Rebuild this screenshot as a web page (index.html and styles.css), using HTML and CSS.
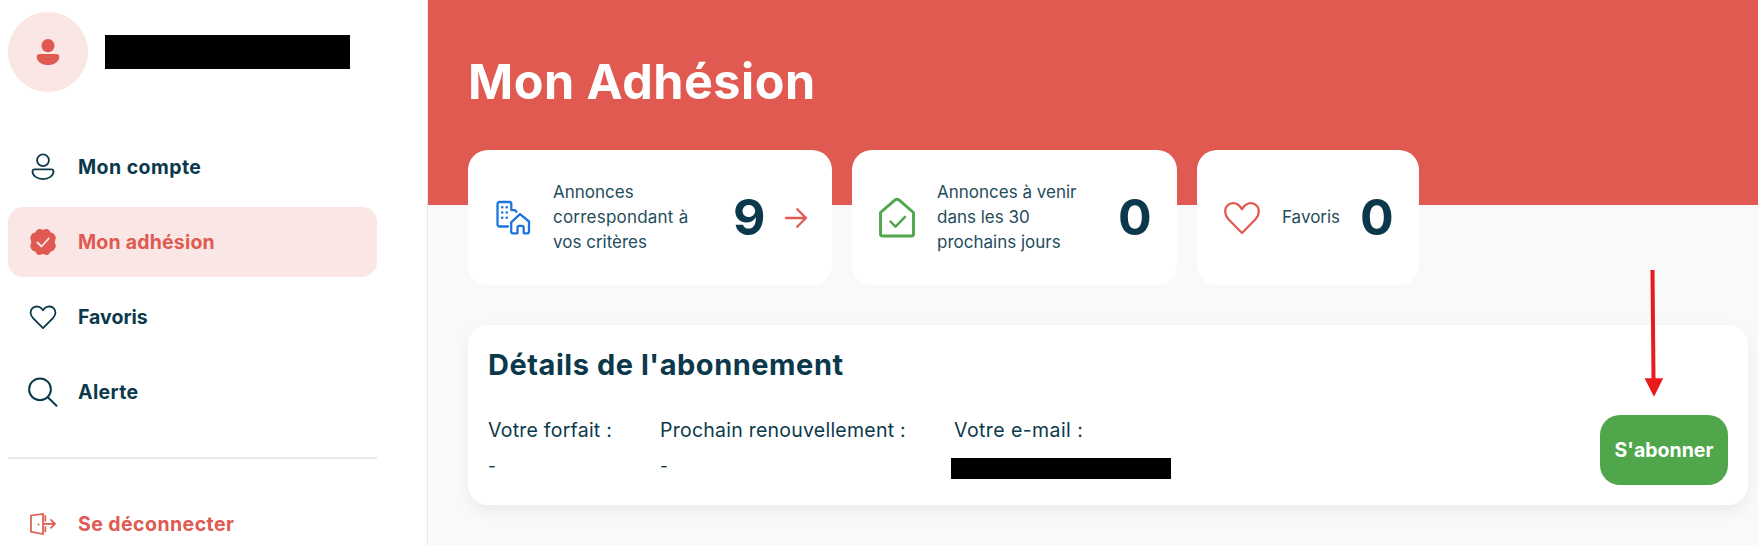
FILE: index.html
```
<!DOCTYPE html>
<html lang="fr">
<head>
    <meta charset="UTF-8">
    <meta name="viewport" content="width=device-width, initial-scale=1.0">
    <title>Mon Adhésion</title>
    <link rel="stylesheet" href="styles.css">
</head>
<body>
    <aside class="sidebar">
        <div class="profile">
            <div class="avatar">
                <svg width="24" height="28" viewBox="0 0 24 28" fill="currentColor">
                    <circle cx="12" cy="7.6" r="6.6"/>
                    <path d="M3.5 16h17c1.7 0 2.8 1.1 2.8 2.8 0 4.600-5.100 8.300-11.300 8.300S.7 23.400.7 18.800C.7 17.100 1.800 16 3.500 16z"/>
                </svg>
            </div>
            <div class="profile-name"></div>
        </div>
        <nav class="menu">
            <a class="menu-item">
                <svg class="icon" viewBox="0 0 30 30" fill="none" stroke="currentColor" stroke-width="1.8">
                    <circle cx="15" cy="8.300" r="5.900"/>
                    <path d="M6.700 17.400h16.600c1.400 0 2.200.8 2.200 2.200 0 4.100-4.700 7.500-10.500 7.500S4.500 23.700 4.500 19.600c0-1.400.8-2.200 2.200-2.200z"/>
                </svg>
                <span class="menu-compte">Mon compte</span>
            </a>
            <a class="menu-item active">
                <svg class="icon" viewBox="0 0 30 30">
                    <path fill="currentColor" stroke="currentColor" stroke-width="1.500" stroke-linejoin="round" d="M11 2.800Q13 2.500 15 4Q17 2.500 19 2.800Q21.300 3.500 22 6Q24.800 6.200 26 8.200Q27.700 10 26.600 12.800Q26 14 25.800 15Q26 16 26.800 17.500Q27.700 20 26 21.800Q24.800 23.700 22 24Q21.300 26.500 19 27.200Q17 27.500 15 26Q13 27.500 11 27.200Q8.700 26.500 8 24Q5.200 23.800 4 21.800Q2.300 20 3.300 17.500Q4 16 4.200 15Q4 14 3.300 12.800Q2.300 10 4 8.200Q5.200 6.200 8 6Q8.700 3.500 11 2.800z"/>
                    <path fill="none" stroke="#fae6e5" stroke-width="1.800" stroke-linecap="round" stroke-linejoin="round" d="M9.500 15.500l4 4 7.200-8"/>
                </svg>
                <span class="menu-adhesion">Mon adhésion</span>
            </a>
            <a class="menu-item">
                <svg class="icon" viewBox="0 0 30 30" fill="none" stroke="currentColor" stroke-width="1.800" stroke-linejoin="round">
                    <path d="M15 26.200L4.800 15.800C1.600 12.400 2 8 4.900 5.800c3.100-2.300 7.500-1.600 10.100 2.400 2.600-4 7-4.700 10.100-2.400 2.900 2.200 3.300 6.600.1 10z"/>
                </svg>
                <span>Favoris</span>
            </a>
            <a class="menu-item">
                <svg class="icon" viewBox="0 0 30 30" fill="none" stroke="currentColor" stroke-width="2" stroke-linecap="round">
                    <circle cx="12" cy="12.300" r="10.900"/>
                    <path d="M19.800 20.200l8.700 8.500"/>
                </svg>
                <span class="menu-alerte">Alerte</span>
            </a>
        </nav>
        <hr class="separator">
        <a class="menu-item logout">
            <svg class="icon" viewBox="0 0 30 30" fill="none" stroke="currentColor" stroke-width="1.700">
                <path d="M3 6.500L15 5v20L3 22.800zM17.300 6.300v6.200M17.300 17.300v6M14.500 14.800h12M22.500 10.300l4.500 4.500-4.500 4.500"/>
                <circle cx="10.500" cy="15.500" r="1" fill="currentColor" stroke="none"/>
            </svg>
            <span class="menu-logout">Se déconnecter</span>
        </a>
    </aside>

    <main class="content">
        <header class="banner">
            <h1>Mon Adhésion</h1>
        </header>

        <section class="stats">
            <div class="card card-criteres">
                <svg class="card-icon" width="36" height="36" viewBox="0 0 36 36" fill="none" stroke="#1d76df" stroke-width="2.300" stroke-linecap="round" stroke-linejoin="round">
                    <path d="M13 26.500H4.500a2 2 0 0 1-2-2V4a2 2 0 0 1 2-2h9.800a2 2 0 0 1 2 2v6.200H20l1.300 1.600"/>
                    <path d="M7.200 7.300h.1M11.700 7.300h.1M7.200 12.500h.1M11.700 12.500h.1M7.200 17.700h.1M11.700 17.700h.1" stroke-width="2.500"/>
                    <path d="M25 14.200l9 7.300v10a1.800 1.800 0 0 1-1.800 1.800h-3.500v-5.500c0-1.200-.8-2-2-2h-2.200c-1.200 0-2 .8-2 2v5.500h-4.800a1.500 1.500 0 0 1-1.500-1.500V22.300z"/>
                </svg>
                <p>Annonces<br><span class="line-correspond">correspondant à</span><br>vos critères</p>
                <strong>9</strong>
                <svg class="arrow" width="24" height="22" viewBox="0 0 24 22" fill="none" stroke="currentColor" stroke-width="2.300" stroke-linecap="round" stroke-linejoin="round">
                    <path d="M2 11h20M13.200 2.300l8.800 8.700-8.800 8.700"/>
                </svg>
            </div>
            <div class="card card-venir">
                <svg class="card-icon" width="38" height="42" viewBox="0 0 38 42" fill="none" stroke="#50a64b" stroke-width="2.900" stroke-linecap="round" stroke-linejoin="round">
                    <path d="M2.500 15.500L16.800 3.100q2.200-1.800 4.400 0L35.500 15.500V37q0 2-2 2H4.500q-2 0-2-2z"/>
                    <path d="M12.500 24.500l5 5.200L27 19.800" stroke-width="2.500"/>
                </svg>
                <p>Annonces à venir<br>dans les 30<br>prochains jours</p>
                <strong>0</strong>
            </div>
            <div class="card card-favoris">
                <svg class="card-icon" width="38" height="34" viewBox="0 0 38 34" fill="none" stroke="#e05a52" stroke-width="2.200" stroke-linejoin="round">
                    <path d="M19 32L5.500 18.200C.8 13 1.400 6.600 5.500 3.700 10 .5 15.800 2.200 19 8.300 22.200 2.200 28 .5 32.500 3.700 36.600 6.600 37.200 13 32.500 18.200z"/>
                </svg>
                <p>Favoris</p>
                <strong>0</strong>
            </div>
        </section>

        <section class="details">
            <h2>Détails de l'abonnement</h2>
            <div class="details-row">
                <div class="field field-forfait">
                    <h3>Votre forfait :</h3>
                    <p>-</p>
                </div>
                <div class="field field-date">
                    <h3>Prochain renouvellement :</h3>
                    <p>-</p>
                </div>
                <div class="field field-mail">
                    <h3>Votre e-mail :</h3>
                    <div class="mail-value"></div>
                </div>
            </div>
            <button class="subscribe" type="button">S'abonner</button>
            <svg class="pointer" width="20" height="128" viewBox="0 0 20 128" fill="#e9191d">
                <path d="M6.500 0h4l1 109h-4z"/>
                <path d="M.6 108.200h18.600L10 126.700z"/>
            </svg>
        </section>
    </main>
</body>
</html>
```

FILE: styles.css
```
/* Reset */
* {
    margin: 0;
    padding: 0;
    box-sizing: border-box;
}

body {
    display: flex;
    height: 545px;
    overflow: hidden;
    font-family: Inter, "Liberation Sans", sans-serif;
    color: #0b394b;
    background-color: #f9f9f9;
}

/* Sidebar */
.sidebar {
    width: 428px;
    height: 545px;
    flex-shrink: 0;
    overflow: hidden;
    padding: 12px 50px 0 8px;
    background-color: #fff;
    border-right: 1px solid #e8e8e8;
}

.profile {
    display: flex;
    align-items: center;
    gap: 17px;
    height: 80px;
}

.avatar {
    display: flex;
    align-items: center;
    justify-content: center;
    width: 80px;
    height: 80px;
    border-radius: 50%;
    color: #e05a52;
    background-color: #fae6e5;
}

.profile-name {
    width: 245px;
    height: 34px;
    margin-bottom: 1px;
    background-color: #000;
}

.menu {
    display: flex;
    flex-direction: column;
    gap: 5px;
    margin-top: 40px;
}

.menu-item {
    display: flex;
    align-items: center;
    gap: 20px;
    height: 70px;
    width: 369px;
    padding-left: 20px;
    border-radius: 15px;
    font-size: 19.5px;
    font-weight: 700;
    white-space: nowrap;
}

.menu-item.active {
    color: #e05a52;
    background-color: #fae6e5;
}

.menu-compte,
.menu-logout {
    letter-spacing: 0.44px;
}

.menu-adhesion {
    letter-spacing: 0.2px;
}

.menu-alerte {
    letter-spacing: 0.35px;
}

.icon {
    width: 30px;
    height: 30px;
    flex-shrink: 0;
}

.separator {
    width: 369px;
    height: 2px;
    margin: 30px 0;
    border: none;
    background-color: #e9e9e9;
}

.logout {
    color: #e05a52;
}

/* Content */
.content {
    flex: 1;
    min-width: 0;
}

.banner {
    height: 205px;
    padding: 50px 40px 0;
    color: #fff;
    background-color: #e05a52;
}

.banner h1 {
    font-size: 48.5px;
    line-height: 64px;
    font-weight: 700;
    letter-spacing: 0.5px;
    white-space: nowrap;
}

.stats {
    position: relative;
    display: flex;
    gap: 20px;
    margin: -55px 0 0 40px;
}

.card {
    display: flex;
    align-items: center;
    height: 135px;
    padding-left: 27px;
    border-radius: 20px;
    background-color: #fff;
}

.card-icon {
    flex-shrink: 0;
}

.card p {
    font-size: 17px;
    line-height: 25px;
    white-space: nowrap;
    color: #244c5c;
}

.card strong {
    padding-bottom: 2px;
    font-size: 50px;
    line-height: 60px;
    font-weight: 700;
}

.card-criteres {
    width: 364px;
}

.card-criteres p {
    width: 180px;
    margin-left: 22px;
}

.card-criteres strong {
    width: 51px;
}

.line-correspond {
    letter-spacing: 0.22px;
}

.arrow {
    color: #e05a52;
}

.card-venir {
    width: 325px;
    padding-left: 26px;
}

.card-venir p {
    width: 181px;
    margin-left: 21px;
}

.card-favoris {
    width: 222px;
    padding-left: 26px;
}

.card-favoris p {
    width: 78px;
    margin-left: 21px;
}

/* Subscription details */
.details {
    position: relative;
    height: 180px;
    margin: 40px 10px 0 40px;
    padding: 20px;
    border-radius: 20px;
    background-color: #fff;
    box-shadow: 0 5px 15px rgba(0, 0, 0, 0.06);
}

.details h2 {
    font-size: 29px;
    line-height: 40px;
    font-weight: 700;
    letter-spacing: 0.53px;
    white-space: nowrap;
}

.details-row {
    display: flex;
    margin-top: 30px;
}

.field h3 {
    font-size: 19.5px;
    line-height: 30px;
    font-weight: 400;
    letter-spacing: 0.24px;
    white-space: nowrap;
}

.field p {
    margin-top: 9px;
    font-size: 17px;
    line-height: 25px;
}

.field-forfait {
    width: 172px;
}

.field-date {
    width: 294px;
}

.field-mail h3 {
    letter-spacing: 0.42px;
}

.mail-value {
    width: 220px;
    height: 21px;
    margin: 13px 0 0 -3px;
    background-color: #000;
}

.subscribe {
    position: absolute;
    right: 20px;
    bottom: 20px;
    width: 128px;
    height: 70px;
    border: none;
    border-radius: 20px;
    font-family: inherit;
    font-size: 19.5px;
    font-weight: 700;
    color: #fff;
    background-color: #50a64b;
    cursor: pointer;
}

/* Arrow drawn over the card, pointing at the button */
.pointer {
    position: absolute;
    top: -55px;
    right: 84px;
}
```
